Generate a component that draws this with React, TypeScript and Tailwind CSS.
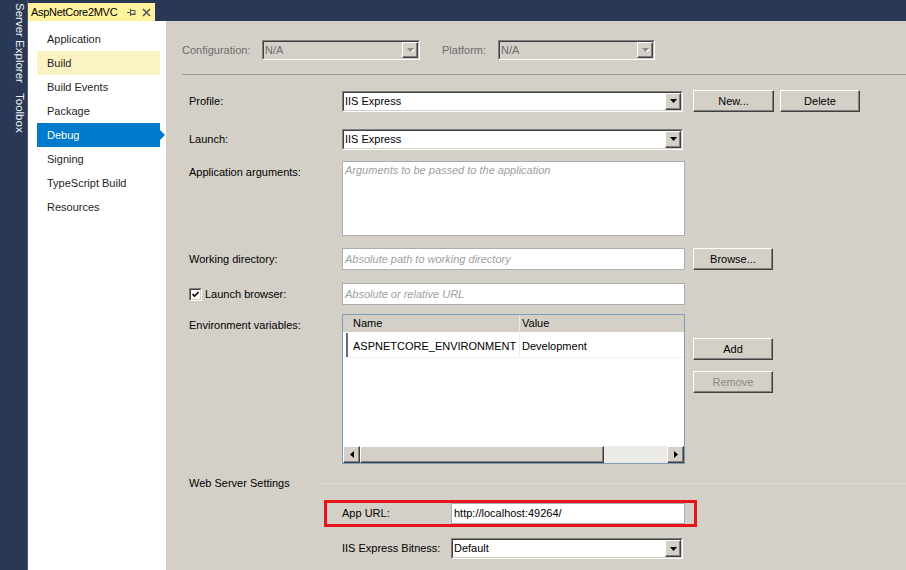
import React from "react";

function Arrow({ disabled }: { disabled?: boolean }) {
  return (
    <svg width="7" height="4" viewBox="0 0 7 4">
      {disabled && <path d="M1 1h7l-3.5 4z" fill="#ffffff" />}
      <path d="M0 0h7l-3.5 4z" fill={disabled ? "#8a8a8a" : "#000000"} />
    </svg>
  );
}

function Raised({ className, children }: { className?: string; children?: React.ReactNode }) {
  return (
    <div
      className={
        "flex items-center justify-center border border-t-white border-l-white border-b-[#404040] border-r-[#404040] bg-[#d4d0c8] shadow-[inset_-1px_-1px_0_#808080] " +
        (className ?? "")
      }
    >
      {children}
    </div>
  );
}

function Combo({ value, className, disabled }: { value: string; className: string; disabled?: boolean }) {
  return (
    <div className={"flex border border-t-[#808080] border-l-[#808080] border-b-white border-r-white " + className}>
      <div
        className={
          "flex flex-1 items-stretch border border-t-[#404040] border-l-[#404040] border-b-[#d4d0c8] border-r-[#d4d0c8] " +
          (disabled ? "bg-[#d4d0c8] text-[#6d6d6d]" : "bg-white text-black")
        }
      >
        <span className="flex flex-1 items-center pl-[1px]">{value}</span>
        <Raised className="w-[16px]">
          <Arrow disabled={disabled} />
        </Raised>
      </div>
    </div>
  );
}

function Button({ label, className, disabled }: { label: string; className: string; disabled?: boolean }) {
  return (
    <Raised className={"h-[22px] " + className}>
      <span className={disabled ? "text-[#8a8a8a]" : "text-black"}>{label}</span>
    </Raised>
  );
}

function TextBox({ placeholder, value, className }: { placeholder?: string; value?: string; className: string }) {
  return (
    <div className={"flex border border-[#abadb3] bg-white pl-[2px] " + className}>
      {value ? (
        <span className="text-black">{value}</span>
      ) : (
        <span className="italic text-[#a0a0a0]">{placeholder}</span>
      )}
    </div>
  );
}

const nav = ["Application", "Build", "Build Events", "Package", "Debug", "Signing", "TypeScript Build", "Resources"];

export default function App() {
  return (
    <div className="flex h-[570px] w-[906px] overflow-hidden bg-[#293955] font-['Liberation_Sans',Arial,sans-serif] text-[11px] text-black">
      {/* tool window strip */}
      <div className="flex w-[28px] flex-col border-r border-[#4b5c7c] pl-[4px] text-[11.5px] text-[#eef1f6]">
        <span className="mt-[3px] leading-[14px] [writing-mode:vertical-rl]">Server Explorer</span>
        <span className="mt-[10px] leading-[14px] [writing-mode:vertical-rl]">Toolbox</span>
      </div>

      <div className="flex flex-1 flex-col">
        {/* document tab */}
        <div className="flex h-[21px] items-end">
          <div className="flex h-[18px] w-[127px] items-center bg-[#fff29d] pl-[3px] text-[11px] text-black">
            <span className="tracking-[-0.3px]">AspNetCore2MVC</span>
            <svg className="ml-[10px]" width="10" height="9" viewBox="0 0 10 9">
              <path d="M0 4.5h3M3.5 1v7M3.5 2.5h4.5v3.5h-4.5M3.5 6.5h5" stroke="#555" fill="none" />
            </svg>
            <svg className="ml-[5px]" width="9" height="9" viewBox="0 0 9 9">
              <path d="M1 1l7 7M8 1l-7 7" stroke="#555" strokeWidth="1.6" />
            </svg>
          </div>
        </div>

        <div className="flex flex-1">
          {/* property pages nav */}
          <div className="w-[138px] bg-white pl-[9px] pt-[6px] text-[#1e1e1e]">
            {nav.map((n) => (
              <div
                key={n}
                className={
                  "relative flex h-[24px] w-[123px] items-center pl-[10px] " +
                  (n === "Build" ? "bg-[#fcf3c4]" : n === "Debug" ? "bg-[#007acc] text-white" : "")
                }
              >
                {n}
                {n === "Debug" && (
                  <span className="absolute right-[-5px] top-[7px] h-0 w-0 border-y-[5px] border-l-[5px] border-y-transparent border-l-[#007acc]" />
                )}
              </div>
            ))}
          </div>

          {/* content */}
          <div className="flex flex-1 flex-col bg-[#d4d0c8]">
            <div className="ml-[16px] mt-[19px] flex h-[20px] items-center text-[#6d6d6d]">
              <span className="w-[80px]">Configuration:</span>
              <Combo value="N/A" className="h-[20px] w-[158px]" disabled />
              <span className="ml-[22px] w-[56px]">Platform:</span>
              <Combo value="N/A" className="h-[20px] w-[157px]" disabled />
            </div>
            <div className="ml-[16px] mt-[14px] h-px bg-[#9a9a9a]" />

            <div className="ml-[23px] flex flex-col">
              <div className="mt-[15px] flex h-[22px] items-center">
                <span className="w-[153px]">Profile:</span>
                <Combo value="IIS Express" className="h-[21px] w-[341px]" />
                <Button label="New..." className="ml-[10px] w-[81px]" />
                <Button label="Delete" className="ml-[6px] w-[80px]" />
              </div>

              <div className="mt-[16px] flex h-[22px] items-center">
                <span className="w-[153px]">Launch:</span>
                <Combo value="IIS Express" className="h-[21px] w-[341px]" />
              </div>

              <div className="mt-[11px] flex">
                <span className="w-[153px] pt-[3px]">Application arguments:</span>
                <TextBox placeholder="Arguments to be passed to the application" className="h-[75px] w-[343px]" />
              </div>

              <div className="mt-[12px] flex h-[22px] items-center">
                <span className="w-[153px]">Working directory:</span>
                <TextBox placeholder="Absolute path to working directory" className="h-[22px] w-[343px] items-center" />
                <Button label="Browse..." className="ml-[8px] w-[80px]" />
              </div>

              <div className="mt-[13px] flex h-[22px] items-center">
                <div className="flex w-[153px] items-center">
                  <div className="flex h-[13px] w-[13px] border border-t-[#808080] border-l-[#808080] border-b-white border-r-white">
                    <div className="flex flex-1 items-center justify-center border border-t-[#404040] border-l-[#404040] border-b-[#d4d0c8] border-r-[#d4d0c8] bg-white">
                      <svg width="7" height="7" viewBox="0 0 7 7">
                        <path d="M0.5 3l2 2.2L6.5 1" stroke="#000" strokeWidth="1.6" fill="none" />
                      </svg>
                    </div>
                  </div>
                  <span className="ml-[3px]">Launch browser:</span>
                </div>
                <TextBox placeholder="Absolute or relative URL" className="h-[22px] w-[343px] items-center" />
              </div>

              <div className="mt-[9px] flex">
                <span className="w-[153px] pt-[3px]">Environment variables:</span>
                <div className="flex h-[150px] w-[343px] flex-col border border-[#7f9db9] bg-white">
                  <div className="flex h-[18px] items-center border-b border-white bg-[#d4d0c8]">
                    <span className="flex h-full w-[177px] items-center border-r border-[#ebe9e4] pl-[10px]">Name</span>
                    <span className="pl-[2px]">Value</span>
                  </div>
                  <div className="flex h-[25px] items-stretch border-b border-[#f0f0f0]">
                    <div className="ml-[3px] w-[2px] bg-[#6b6b6b]" />
                    <span className="flex w-[172px] items-center border-r border-[#ececec] pl-[5px] pt-[2px]">ASPNETCORE_ENVIRONMENT</span>
                    <span className="flex items-center pl-[2px] pt-[2px]">Development</span>
                  </div>
                  <div className="flex-1" />
                  <div className="flex h-[17px]">
                    <Raised className="w-[17px]">
                      <svg width="4" height="7" viewBox="0 0 4 7">
                        <path d="M4 0v7L0 3.5z" fill="#000" />
                      </svg>
                    </Raised>
                    <Raised className="w-[244px]" />
                    <div className="flex-1 bg-[#eceae6]" />
                    <Raised className="w-[17px]">
                      <svg width="4" height="7" viewBox="0 0 4 7">
                        <path d="M0 0v7L4 3.5z" fill="#000" />
                      </svg>
                    </Raised>
                  </div>
                </div>
                <div className="ml-[8px] flex flex-col">
                  <Button label="Add" className="mt-[24px] w-[80px]" />
                  <Button label="Remove" className="mt-[11px] w-[80px]" disabled />
                </div>
              </div>

              <div className="mt-[12px] flex h-[14px] items-center">
                <span>Web Server Settings</span>
                <div className="ml-[30px] h-px flex-1 bg-[#dedbd4]" />
              </div>

              <div className="ml-[135px] mt-[10px] flex h-[27px] w-[373px] items-center border-[3px] border-[#e8141b] pl-[15px]">
                <span className="w-[109px]">App URL:</span>
                <TextBox value="http://localhost:49264/" className="h-[21px] w-[234px] items-center" />
              </div>

              <div className="ml-[153px] mt-[11px] flex h-[21px] items-center">
                <span className="w-[109px]">IIS Express Bitness:</span>
                <Combo value="Default" className="h-[21px] w-[232px]" />
              </div>
            </div>
          </div>
        </div>
      </div>
    </div>
  );
}
